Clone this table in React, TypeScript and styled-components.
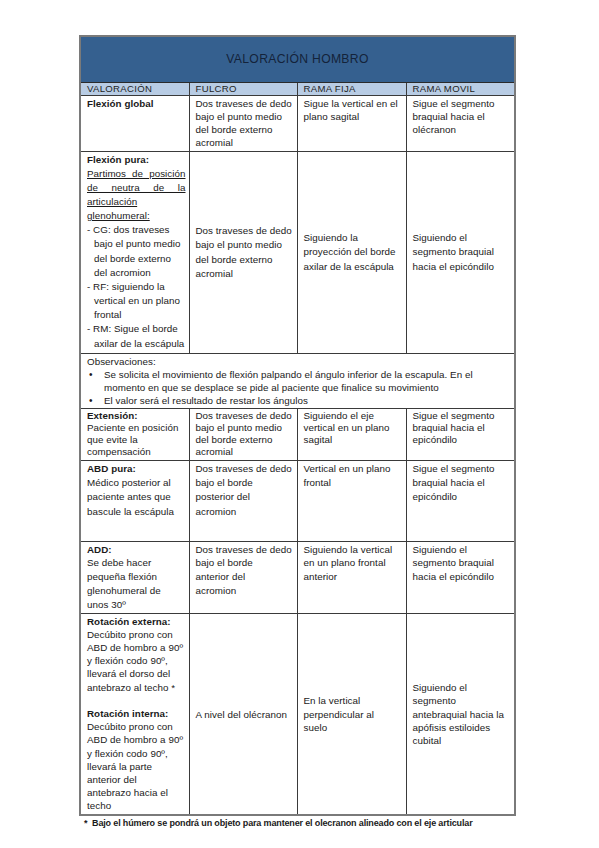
import React from 'react'
import styled, { createGlobalStyle } from 'styled-components'

const GlobalStyle = createGlobalStyle`
  html, body {
    margin: 0;
    padding: 0;
    background: #ffffff;
  }
  body {
    font-family: 'Liberation Sans', Arial, sans-serif;
    color: #1a1a1a;
  }
`

type Line =
  | string
  | { text: string; bold?: boolean; underline?: boolean; justify?: boolean; hang?: boolean; blank?: boolean }

interface iRow {
  lh: number
  height: number
  middle?: boolean
  cells: Line[][]
}

const hang = (text: string): Line => ({ text, hang: true })

const rows: iRow[] = [
  {
    height: 56,
    lh: 13.2,
    cells: [
      [{ text: 'Flexión global', bold: true }],
      ['Dos traveses de dedo', 'bajo el punto medio', 'del borde externo', 'acromial'],
      ['Sigue la vertical en el', 'plano sagital'],
      ['Sigue el segmento', 'braquial hacia el', 'olécranon']
    ]
  },
  {
    height: 202,
    lh: 14.15,
    middle: true,
    cells: [
      [
        { text: 'Flexión pura:', bold: true },
        { text: 'Partimos de posición', underline: true, justify: true },
        { text: 'de neutra de la', underline: true, justify: true },
        { text: 'articulación', underline: true },
        { text: 'glenohumeral:', underline: true },
        '- CG: dos traveses',
        hang('bajo el punto medio'),
        hang('del borde externo'),
        hang('del acromion'),
        '- RF: siguiendo la',
        hang('vertical en un plano'),
        hang('frontal'),
        '- RM: Sigue el borde',
        hang('axilar de la escápula')
      ],
      ['Dos traveses de dedo', 'bajo el punto medio', 'del borde externo', 'acromial'],
      ['Siguiendo la', 'proyección del borde', 'axilar de la escápula'],
      ['Siguiendo el', 'segmento braquial', 'hacia el epicóndilo']
    ]
  }
]

const rowsAfter: iRow[] = [
  {
    height: 52,
    lh: 12.3,
    cells: [
      [{ text: 'Extensión:', bold: true }, 'Paciente en posición', 'que evite la', 'compensación'],
      ['Dos traveses de dedo', 'bajo el punto medio', 'del borde externo', 'acromial'],
      ['Siguiendo el eje', 'vertical en un plano', 'sagital'],
      ['Sigue el segmento', 'braquial hacia el', 'epicóndilo']
    ]
  },
  {
    height: 81,
    lh: 14.4,
    cells: [
      [{ text: 'ABD pura:', bold: true }, 'Médico posterior al', 'paciente antes que', 'bascule la escápula'],
      ['Dos traveses de dedo', 'bajo el borde', 'posterior del', 'acromion'],
      ['Vertical en un plano', 'frontal'],
      ['Sigue el segmento', 'braquial hacia el', 'epicóndilo']
    ]
  },
  {
    height: 72,
    lh: 13.9,
    cells: [
      [{ text: 'ADD:', bold: true }, 'Se debe hacer', 'pequeña flexión', 'glenohumeral de', 'unos 30º'],
      ['Dos traveses de dedo', 'bajo el borde', 'anterior del', 'acromion'],
      ['Siguiendo la vertical', 'en un plano frontal', 'anterior'],
      ['Siguiendo el', 'segmento braquial', 'hacia el epicóndilo']
    ]
  },
  {
    height: 202,
    lh: 13.2,
    middle: true,
    cells: [
      [
        { text: 'Rotación externa:', bold: true },
        'Decúbito prono con',
        'ABD de hombro a 90º',
        'y flexión codo 90º,',
        'llevará el dorso del',
        'antebrazo al techo *',
        { text: '', blank: true },
        { text: 'Rotación interna:', bold: true },
        'Decúbito prono con',
        'ABD de hombro a 90º',
        'y flexión codo 90º,',
        'llevará la parte',
        'anterior del',
        'antebrazo hacia el',
        'techo'
      ],
      ['A nivel del olécranon'],
      ['En la vertical', 'perpendicular al', 'suelo'],
      ['Siguiendo el', 'segmento', 'antebraquial hacia la', 'apófisis estiloides', 'cubital']
    ]
  }
]

const headers = ['VALORACIÓN', 'FULCRO', 'RAMA FIJA', 'RAMA MOVIL']

const renderLines = (lines: Line[]) =>
  lines.map((line, i) => {
    const l = typeof line === 'string' ? { text: line } : line
    return (
      <TextLine key={i} $bold={l.bold} $underline={l.underline} $justify={l.justify} $hang={l.hang}>
        {l.blank ? '\u00a0' : l.text}
      </TextLine>
    )
  })

const BodyRow: React.FC<{ row: iRow }> = ({ row }) => (
  <Tr $height={row.height}>
    {row.cells.map((cell, ci) => (
      <Td key={ci} $lh={row.lh} $middle={row.middle && ci > 0}>
        {renderLines(cell)}
      </Td>
    ))}
  </Tr>
)

export default function App() {
  return (
    <>
      <GlobalStyle />
      <Page>
        <Sheet>
          <Table>
            <colgroup>
              <col style={{ width: 109 }} />
              <col style={{ width: 108 }} />
              <col style={{ width: 109 }} />
              <col style={{ width: 109 }} />
            </colgroup>
            <tbody>
              <tr>
                <TitleCell colSpan={4}>VALORACIÓN HOMBRO</TitleCell>
              </tr>
              <tr>
                {headers.map((h) => (
                  <HeadCell key={h}>{h}</HeadCell>
                ))}
              </tr>
              {rows.map((r, i) => (
                <BodyRow key={i} row={r} />
              ))}
              <Tr $height={55}>
                <ObsCell colSpan={4}>
                  <div>Observaciones:</div>
                  <BulletList>
                    <Bullet>
                      Se solicita el movimiento de flexión palpando el ángulo inferior de la escapula. En el
                      <br />
                      momento en que se desplace se pide al paciente que finalice su movimiento
                    </Bullet>
                    <Bullet>El valor será el resultado de restar los ángulos</Bullet>
                  </BulletList>
                </ObsCell>
              </Tr>
              {rowsAfter.map((r, i) => (
                <BodyRow key={i} row={r} />
              ))}
            </tbody>
          </Table>
          <Footnote>* &nbsp;Bajo el húmero se pondrá un objeto para mantener el olecranon alineado con el eje articular</Footnote>
        </Sheet>
      </Page>
    </>
  )
}

const Page = styled.div`
  width: 599px;
  min-height: 848px;
  padding: 35px 0 0 79px;
  box-sizing: border-box;
`
const Sheet = styled.div`
  width: 437px;
`
const Table = styled.table`
  width: 437px;
  border-collapse: collapse;
  table-layout: fixed;
  border: 2px solid #7a7a7a;
  font-size: 9.8px;
  letter-spacing: 0.05px;
`
const TitleCell = styled.td`
  height: 46px;
  padding: 0;
  background: #35608f;
  color: #14233a;
  text-align: center;
  font-size: 12.2px;
  letter-spacing: 0.3px;
  border: 1px solid #3a3a3a;
  border-bottom: 1px solid #2a2a2a;
  box-sizing: border-box;
`
const HeadCell = styled.td`
  height: 13px;
  padding: 0 3px 0 6px;
  background: #b8cce4;
  color: #1e1e1e;
  font-size: 9.6px;
  line-height: 12px;
  letter-spacing: 0.3px;
  border: 1px solid #3a3a3a;
  box-sizing: border-box;
`
const Tr = styled.tr<{ $height: number }>`
  height: ${(p) => p.$height}px;
`
const Td = styled.td<{ $lh: number; $middle?: boolean }>`
  padding: 1px 3px 0 6px;
  vertical-align: ${(p) => (p.$middle ? 'middle' : 'top')};
  line-height: ${(p) => p.$lh}px;
  border: 1px solid #3a3a3a;
  white-space: nowrap;
  overflow: hidden;
`
const TextLine = styled.div<{
  $bold?: boolean
  $underline?: boolean
  $justify?: boolean
  $hang?: boolean
}>`
  padding-left: ${(p) => (p.$hang ? 7 : 0)}px;
  font-weight: ${(p) => (p.$bold ? 700 : 400)};
  text-decoration: ${(p) => (p.$underline ? 'underline' : 'none')};
  text-align: ${(p) => (p.$justify ? 'justify' : 'left')};
  text-align-last: ${(p) => (p.$justify ? 'justify' : 'auto')};
  white-space: ${(p) => (p.$justify ? 'normal' : 'nowrap')};
`
const ObsCell = styled.td`
  padding: 1px 3px 1px 6px;
  vertical-align: top;
  line-height: 13px;
  border: 1px solid #3a3a3a;
  white-space: nowrap;
`
const BulletList = styled.ul`
  list-style: none;
  margin: 0;
  padding: 0 0 0 17px;
`
const Bullet = styled.li`
  position: relative;

  &::before {
    content: '•';
    position: absolute;
    left: -15px;
    top: 0;
    font-size: 10px;
  }
`
const Footnote = styled.div`
  margin-top: 1px;
  padding-left: 5px;
  font-size: 9px;
  font-weight: 700;
  letter-spacing: -0.15px;
  line-height: 12px;
  white-space: nowrap;
  color: #1a1a1a;
`
